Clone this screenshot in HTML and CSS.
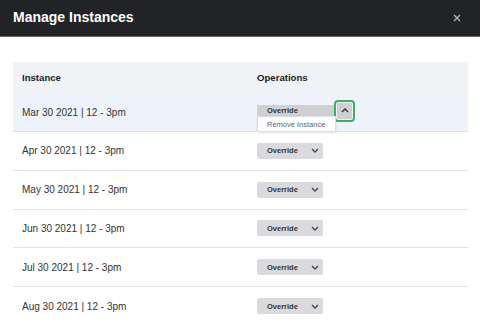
FILE: index.html
```html
<!DOCTYPE html>
<html lang="en">
<head>
    <meta charset="UTF-8">
    <meta name="viewport" content="width=device-width, initial-scale=1.0">
    <title>Manage Instances</title>
    <link rel="stylesheet" href="styles.css">
</head>
<body>
    <header class="modal-header">
        <h1>Manage Instances</h1>
        <button class="close-btn" aria-label="Close">
            <svg width="8" height="8" viewBox="0 0 8 8"><path d="M1 1L7 7M7 1L1 7" stroke="#b4b5b8" stroke-width="1.3" fill="none"/></svg>
        </button>
    </header>

    <div class="modal-body">
        <table class="instance-table">
            <thead>
                <tr>
                    <th>Instance</th>
                    <th>Operations</th>
                </tr>
            </thead>
            <tbody>
                <tr class="selected">
                    <td>Mar 30 2021 | 12 - 3pm</td>
                    <td>
                        <div class="split open">
                            <span class="split-main">Override</span>
                            <span class="split-toggle">
                                <svg width="8" height="5" viewBox="0 0 8 5"><path d="M1 4L4 1L7 4" stroke="#333" stroke-width="1.4" fill="none"/></svg>
                            </span>
                            <div class="split-menu">Remove Instance</div>
                        </div>
                    </td>
                </tr>
                <tr>
                    <td>Apr 30 2021 | 12 - 3pm</td>
                    <td><span class="drop">Override <svg width="8" height="5" viewBox="0 0 8 5"><path d="M1 1L4 4L7 1" stroke="#444" stroke-width="1.3" fill="none"/></svg></span></td>
                </tr>
                <tr>
                    <td>May 30 2021 | 12 - 3pm</td>
                    <td><span class="drop">Override <svg width="8" height="5" viewBox="0 0 8 5"><path d="M1 1L4 4L7 1" stroke="#444" stroke-width="1.3" fill="none"/></svg></span></td>
                </tr>
                <tr>
                    <td>Jun 30 2021 | 12 - 3pm</td>
                    <td><span class="drop">Override <svg width="8" height="5" viewBox="0 0 8 5"><path d="M1 1L4 4L7 1" stroke="#444" stroke-width="1.3" fill="none"/></svg></span></td>
                </tr>
                <tr>
                    <td>Jul 30 2021 | 12 - 3pm</td>
                    <td><span class="drop">Override <svg width="8" height="5" viewBox="0 0 8 5"><path d="M1 1L4 4L7 1" stroke="#444" stroke-width="1.3" fill="none"/></svg></span></td>
                </tr>
                <tr>
                    <td>Aug 30 2021 | 12 - 3pm</td>
                    <td><span class="drop">Override <svg width="8" height="5" viewBox="0 0 8 5"><path d="M1 1L4 4L7 1" stroke="#444" stroke-width="1.3" fill="none"/></svg></span></td>
                </tr>
            </tbody>
        </table>
    </div>
</body>
</html>
```

FILE: styles.css
```css
body {
    margin: 0;
    font-family: "Liberation Sans", Arial, sans-serif;
    color: #333;
    background-color: #fff;
    overflow: hidden;
}
.modal-header {
    height: 36px;
    background-color: #222327;
    border-bottom: 1px solid #6a6b6e;
    display: flex;
    justify-content: space-between;
    align-items: center;
    padding: 0 19px 0 13px;
}
.modal-header h1 {
    margin: 0;
    color: #fff;
    font-size: 14px;
    font-weight: bold;
    margin-top: -2px;
}
.close-btn {
    background: none;
    border: none;
    padding: 0;
    display: flex;
}
.modal-body {
    padding: 25px 12px 0 13px;
}
.instance-table {
    width: 100%;
    border-collapse: collapse;
}
.instance-table th {
    height: 31px;
    padding: 0 9px;
    background-color: #f1f2f6;
    text-align: left;
    font-size: 9.6px;
    font-weight: bold;
    color: #222;
}
.instance-table th:first-child {
    width: 217px;
}
.instance-table td {
    height: 37.8px;
    padding: 0 9px;
    font-size: 10px;
    border-bottom: 1px solid #e2e3e7;
}
.instance-table tr.selected td {
    background-color: #eef3fb;
    height: 38px;
}
.drop {
    display: inline-flex;
    align-items: center;
    justify-content: space-between;
    width: 66px;
    height: 16px;
    box-sizing: border-box;
    padding: 0 4px 0 10px;
    background-color: #d9dadd;
    border-radius: 2px;
    font-size: 7.5px;
    font-weight: bold;
    color: #333;
    vertical-align: middle;
}
.split {
    position: relative;
    display: flex;
    align-items: center;
    margin-top: -3px;
}
.split-main {
    width: 78px;
    height: 11px;
    line-height: 11px;
    box-sizing: border-box;
    padding-left: 10px;
    background-color: #cfd0d4;
    font-size: 7.5px;
    font-weight: bold;
    color: #333;
}
.split-toggle {
    width: 15px;
    height: 16px;
    margin-left: 2px;
    background-color: #cfd0d4;
    border-radius: 1px;
    outline: 2px solid #43ad62;
    outline-offset: 1px;
    display: flex;
    align-items: center;
    justify-content: center;
}
.split-menu {
    position: absolute;
    left: 0;
    top: 13px;
    width: 79px;
    height: 16px;
    line-height: 15px;
    box-sizing: border-box;
    padding-left: 9px;
    background-color: #fff;
    border: 1px solid #dcdde0;
    box-shadow: 0 1px 2px rgba(0,0,0,0.12);
    font-size: 7.5px;
    color: #666;
}
```
